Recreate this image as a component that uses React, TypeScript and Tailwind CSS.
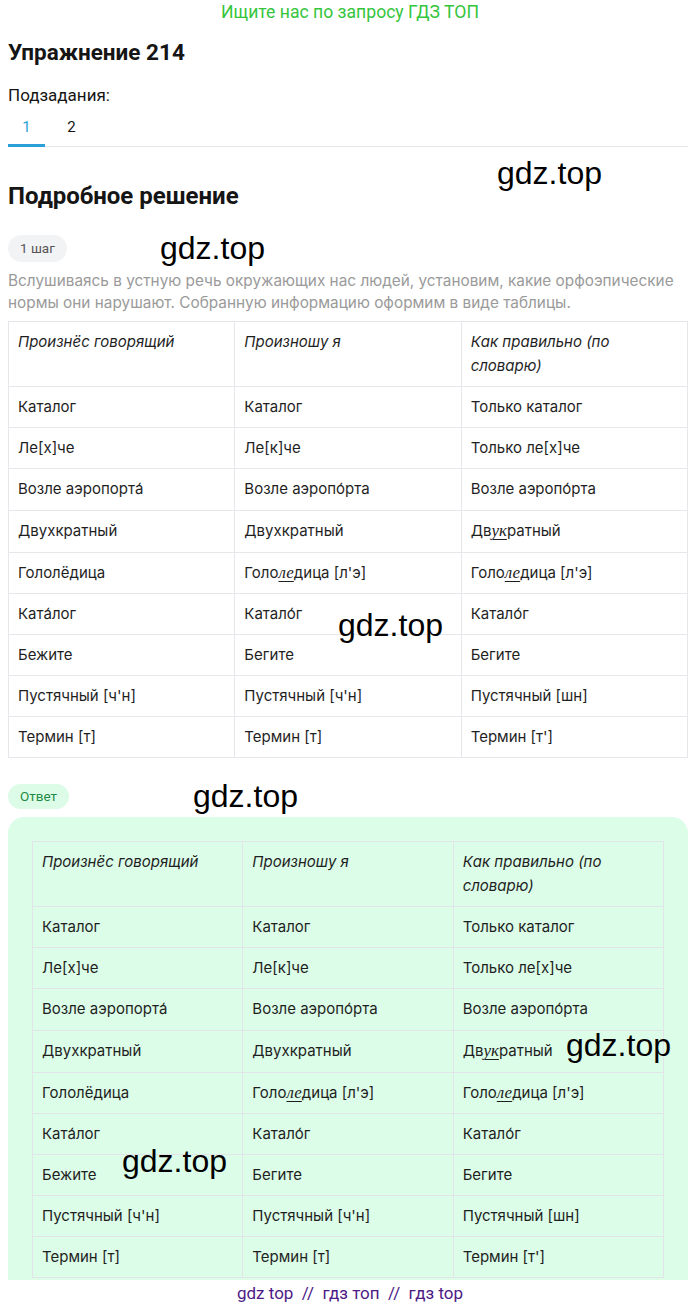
import React from "react";

const U = ({ children }: { children: React.ReactNode }) => (
  <u className="underline decoration-1 underline-offset-[3px]">
    <i className="font-['Liberation_Serif',serif] text-[17px] leading-none">{children}</i>
  </u>
);

type Cell = React.ReactNode;

const header: Cell[] = ["Произнёс говорящий", "Произношу я", "Как правильно (по словарю)"];

const rows: Cell[][] = [
  ["Каталог", "Каталог", "Только каталог"],
  ["Ле[х]че", "Ле[к]че", "Только ле[х]че"],
  ["Возле аэропорта\u0301", "Возле аэропо\u0301рта", "Возле аэропо\u0301рта"],
  [
    "Двухкратный",
    "Двухкратный",
    <>
      Дв<U>ук</U>ратный
    </>,
  ],
  [
    "Гололёдица",
    <>
      Голо<U>ле</U>дица [л'э]
    </>,
    <>
      Голо<U>ле</U>дица [л'э]
    </>,
  ],
  ["Ката\u0301лог", "Катало\u0301г", "Катало\u0301г"],
  ["Бежите", "Бегите", "Бегите"],
  ["Пустячный [ч'н]", "Пустячный [ч'н]", "Пустячный [шн]"],
  ["Термин [т]", "Термин [т]", "Термин [т']"],
];

function Table({ borderClass }: { borderClass: string }) {
  return (
    <table className="w-full table-fixed border-collapse text-[15px] leading-6 text-[#1f1f1f]">
      <tbody>
        <tr>
          {header.map((h, i) => (
            <td key={i} className={`border ${borderClass} px-[9px] py-2 align-top italic`}>
              {h}
            </td>
          ))}
        </tr>
        {rows.map((r, ri) => (
          <tr key={ri} className={ri === 2 || ri === 3 ? "h-[42px]" : "h-[41px]"}>
            {r.map((c, ci) => (
              <td key={ci} className={`border ${borderClass} px-[9px] py-2 align-top`}>
                {c}
              </td>
            ))}
          </tr>
        ))}
      </tbody>
    </table>
  );
}

const WM = ({ top, left }: { top: number; left: number }) => (
  <div
    className="pointer-events-none absolute font-['Liberation_Sans',Arial,sans-serif] text-[32px] leading-none text-black"
    style={{ top, left }}
  >
    gdz.top
  </div>
);

export default function App() {
  return (
    <div className="relative min-h-[1307px] w-[700px] bg-white font-['Inter',sans-serif] text-[#111]">
      <div className="flex h-6 items-center justify-center font-['Roboto',sans-serif] text-[17.6px] text-[#34c53c]">
        Ищите нас по запросу ГДЗ ТОП
      </div>
      <div className="pl-2 pr-3">
        <h1 className="mt-[14px] font-['Roboto',sans-serif] text-[22.5px] font-bold leading-7 text-[#151515]">
          Упражнение 214
        </h1>
        <div className="mt-[17px] font-['Roboto',sans-serif] text-[17px] leading-6 text-[#151515]">
          Подзадания:
        </div>
        <div className="flex gap-2 border-b border-gray-200">
          <div className="-mb-px flex h-[40px] w-[37px] items-center justify-center border-b-[3px] border-[#2a9fd8] pt-1 font-['Roboto',sans-serif] text-[15px] text-[#2a9fd8]">
            1
          </div>
          <div className="-mb-px flex h-[40px] w-[37px] items-center justify-center border-b-[3px] border-transparent pt-1 font-['Roboto',sans-serif] text-[15px] text-[#151515]">
            2
          </div>
        </div>
        <h2 className="mt-[35px] font-['Roboto',sans-serif] text-[24px] font-bold leading-7 text-[#151515]">
          Подробное решение
        </h2>
        <div className="mt-[25px] inline-flex h-[27px] items-center rounded-full bg-[#f2f3f5] px-3 font-['Roboto',sans-serif] text-[13.5px] text-[#555]">
          1 шаг
        </div>
        <p className="mt-2 text-[15.35px] leading-[22px] text-[#9a9a9a]">
          Вслушиваясь в устную речь окружающих нас людей, установим, какие орфоэпические нормы они
          нарушают. Собранную информацию оформим в виде таблицы.
        </p>
        <div className="mt-[7px]">
          <Table borderClass="border-[#e6e7ea]" />
        </div>
        <div className="mt-[26px] inline-flex h-[25px] items-center rounded-full bg-[#dcfce7] px-3 font-['Roboto',sans-serif] text-[13.5px] text-[#1f8a44]">
          Ответ
        </div>
        <div className="mt-2 rounded-t-2xl bg-[#dcfde8] px-6 pb-[2px] pt-6">
          <Table borderClass="border-[#e3e3ea]" />
        </div>
      </div>
      <div className="mt-[1px] text-center font-['Roboto',sans-serif] text-[17px] leading-6 text-[#4d1a86]">
        gdz top &nbsp;//&nbsp; гдз топ &nbsp;//&nbsp; гдз top
      </div>
      <WM top={157} left={497} />
      <WM top={232} left={160} />
      <WM top={609} left={338} />
      <WM top={780} left={193} />
      <WM top={1029} left={566} />
      <WM top={1145} left={122} />
    </div>
  );
}
